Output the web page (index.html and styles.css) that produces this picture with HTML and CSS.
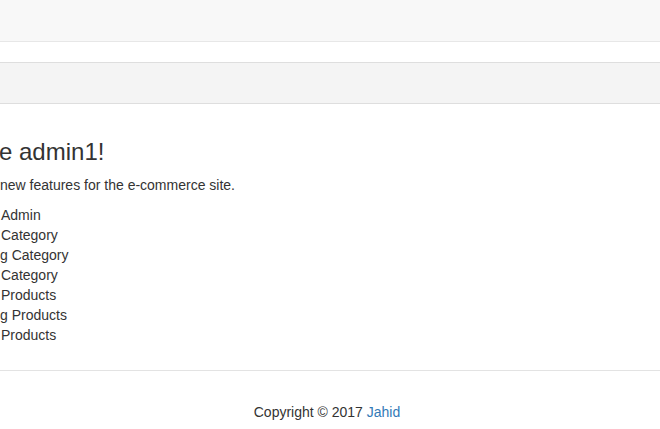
FILE: index.html
```html
<!DOCTYPE html>
<html lang="en">
<head>
<meta charset="utf-8">
<title>Admin</title>
<link rel="stylesheet" href="styles.css">
</head>
<body>
<header class="navbar"></header>
<div class="subbar"></div>
<main class="content">
  <h3 class="welcome">e admin1!</h3>
  <p class="intro">new features for the e-commerce site.</p>
  <ul class="menu">
    <li>Admin</li>
    <li>Category</li>
    <li class="clipped">g Category</li>
    <li>Category</li>
    <li>Products</li>
    <li class="clipped">g Products</li>
    <li>Products</li>
  </ul>
</main>
<hr class="rule">
<footer class="footer">Copyright © 2017 <a href="#" class="footer-link">Jahid</a></footer>
</body>
</html>
```

FILE: styles.css
```css
html, body {
  margin: 0;
  padding: 0;
  background: #fff;
}
body {
  font-family: "Liberation Sans", Arial, sans-serif;
  font-size: 14px;
  line-height: 20px;
  color: #333;
  overflow: hidden;
}
.navbar {
  height: 41px;
  background: #f8f8f8;
  border-bottom: 1px solid #e7e7e7;
  margin-bottom: 20px;
}
.subbar {
  height: 40px;
  background: #f4f4f4;
  border-top: 1px solid #dedede;
  border-bottom: 1px solid #dedede;
}
.content {
  padding: 0;
}
.welcome {
  margin: 35px 0 10px -1px;
  font-size: 24px;
  line-height: 26.4px;
  font-weight: normal;
  color: #333;
}
.intro {
  margin: 0 0 10px 0;
}
.menu {
  list-style: none;
  margin: 0;
  padding: 0 0 0 1px;
}
.menu .clipped {
  text-indent: -1px;
}
.rule {
  border: 0;
  border-top: 1px solid #e3e3e3;
  height: 0;
  margin: 25px 0 0 0;
}
.footer {
  padding: 31px 6px 0 0;
  text-align: center;
}
.footer-link {
  color: #337ab7;
  text-decoration: none;
}
```
